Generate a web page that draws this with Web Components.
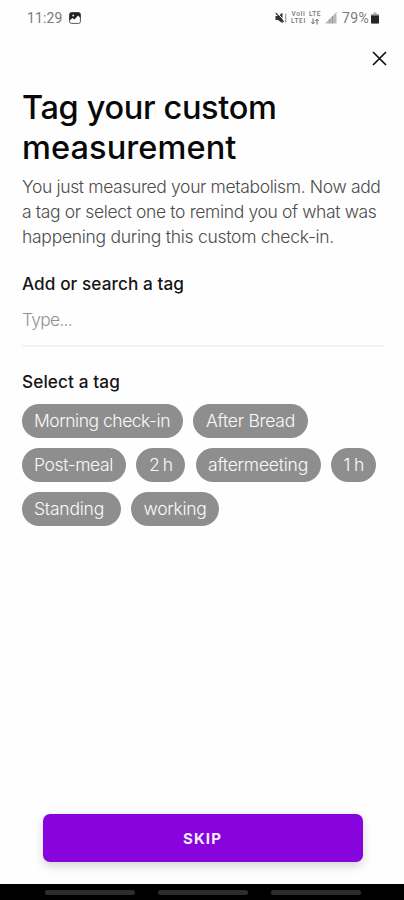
<!DOCTYPE html>
<html lang="en">
<head>
<meta charset="utf-8">
<title>Tag your custom measurement</title>
<style>
html,body{margin:0;height:100%;background:#fefefe}
body{font-family:Inter,"Liberation Sans",sans-serif;overflow:hidden}
</style>
</head>
<body>
<tag-screen></tag-screen>
<script>
const define = (name, html, ready) => customElements.define(name, class extends HTMLElement {
  connectedCallback() {
    if (this.shadowRoot) return;
    this.attachShadow({mode: 'open'}).innerHTML = html;
    if (ready) ready(this);
  }
});

/* One line of text, tracked so that it spans the width given in "w". */
define('text-line', `<style>:host{display:block;white-space:nowrap}span{display:inline-block;vertical-align:top}</style><span><slot></slot></span>`, el => {
  const span = el.shadowRoot.querySelector('span');
  const w = parseFloat(el.getAttribute('w'));
  if (w) {
    span.style.letterSpacing = '0px';
    const gap = (w - span.getBoundingClientRect().width) / el.textContent.length;
    span.style.letterSpacing = gap.toFixed(3) + 'px';
  }
});

define('status-bar', `<style>
:host{display:flex;align-items:center;height:36px;padding:0 25px 0 27px;box-sizing:border-box;font:400 14px/18px Roboto,sans-serif;color:#7c7c7c}
svg{display:block;flex:none}
.pic{margin-left:6px}.sp{flex:1}
.mute{margin-right:4px}.volte{margin-right:3px}.lte{margin-right:4px}.sig{margin-right:5px}.bat{margin-left:2px}
.net{display:flex;flex-direction:column;font:500 6.500px/7px Roboto,sans-serif;color:#777;align-items:center}
</style>
<text-line w="35.500">11:29</text-line>
<svg class="pic" width="12" height="12" viewBox="0 0 12 12"><rect x=".6" y=".6" width="10.8" height="10.8" rx="1.8" fill="#fff" stroke="#555" stroke-width="1"/><path d="M.5 8.5V2L2 .5H10L11.500 2V6L9 3.500 5.500 7.500 3.500 6z" fill="#222"/><circle cx="4.200" cy="3.500" r="1" fill="#ddd"/></svg>
<span class="sp"></span>
<svg class="mute" width="12" height="12" viewBox="0 0 12 12"><path d="M.5 4H3L7.500.8V11.200L3 8H.5z" fill="#333"/><path d="M1.500 0 9.500 9" stroke="#fff"/><path d="M.7.8 8.700 10" stroke="#333" stroke-width="1.200"/><path d="M10.700 1.500v9" stroke="#999" stroke-width="1.200"/></svg>
<div class="net volte"><text-line w="14">VoII</text-line><text-line w="15">LTEI</text-line></div>
<div class="net lte"><text-line w="12">LTE</text-line><svg width="10" height="7" viewBox="0 0 10 7"><path d="M3 .5v5M1.300 4 3 5.800 4.700 4M7 6.500V1.500M5.300 3 7 1.200 8.700 3" fill="none" stroke="#666"/></svg></div>
<svg class="sig" width="12" height="12" viewBox="0 0 12 12"><path d="M0 11.500 11.500 0V11.500z" fill="#b9b9b9"/><path d="M4.500 11.500V7M7.500 11.500V4" stroke="#999"/></svg>
<text-line w="27">79%</text-line>
<svg class="bat" width="8" height="12" viewBox="0 0 8 12"><path d="M2.500.5h3v1.500H8V10.500Q8 11.500 7 11.500H1Q0 11.500 0 10.500V2H2.500z" fill="#aaa"/><path d="M0 3.500H8V10.500Q8 11.500 7 11.500H1Q0 11.500 0 10.500z" fill="#262626"/></svg>`);

define('close-button', `<style>:host{display:flex;justify-content:flex-end;height:44px;padding:15px 17.500px 0 0;box-sizing:border-box}svg{display:block}</style>
<svg width="15" height="15" viewBox="0 0 15 15"><path d="M1 1 14 14M14 1 1 14" stroke="#111" stroke-width="1.700"/></svg>`);

define('page-title', `<style>:host{display:block;font-size:32.500px;line-height:40px;font-weight:500;color:#080808}</style><slot></slot>`);
define('page-copy', `<style>:host{display:block;font-size:17.500px;line-height:25.200px;font-weight:300;color:#4c4c4c;margin-top:6px}</style><slot></slot>`);
define('field-label', `<style>:host{display:block;font-size:17.200px;line-height:24px;font-weight:500;color:#151515}</style><slot></slot>`);
define('tag-input', `<style>:host{display:block;height:51px;box-sizing:border-box;padding-top:12px;font-size:17.500px;line-height:24px;font-weight:300;color:#929292;border-bottom:2px solid #f3f3f3}</style><slot></slot>`);
define('tag-chip', `<style>:host{display:flex;align-items:center;justify-content:center;box-sizing:border-box;height:34px;border-radius:17px;background:#8e8e8e;color:#fafafa;font-size:17.500px;line-height:24px;font-weight:300}</style><slot></slot>`, el => { el.style.width = el.getAttribute('width') + 'px'; });
define('tag-row', `<style>:host{display:flex;gap:10.500px;margin-bottom:10.300px;margin-left:-.5px}</style><slot></slot>`);
define('action-button', `<style>:host{display:flex;align-items:center;justify-content:center;height:48px;margin:0 41.500px 22px 42.500px;border-radius:7px;background:#8705dc;color:#f8ecff;font-size:15px;font-weight:700;box-shadow:0 4px 10px rgba(0,0,0,.17)}</style><slot></slot>`);
define('nav-bar', `<style>:host{display:flex;height:16px;background:#000;gap:23.500px;padding:6px 43px 0 45px;box-sizing:border-box}i{flex:1;height:5px;border-radius:2.500px;background:#2d2d2d}</style><i></i><i></i><i></i>`);

define('tag-screen', `<style>
:host{display:flex;flex-direction:column;width:404px;height:900px;background:#fefefe}
main{flex:1;padding:8px 20px 0 22px}
.add{margin-top:22px}.sel{margin:23px 0 10px}
</style>
<status-bar></status-bar>
<close-button></close-button>
<main>
<page-title><text-line w="254.500">Tag your custom</text-line><text-line w="214.500">measurement</text-line></page-title>
<page-copy><text-line w="358.500">You just measured your metabolism. Now add</text-line><text-line w="354.500">a tag or select one to remind you of what was</text-line><text-line w="312">happening during this custom check-in.</text-line></page-copy>
<field-label class="add"><text-line w="162">Add or search a tag</text-line></field-label>
<tag-input><text-line w="50">Type...</text-line></tag-input>
<field-label class="sel"><text-line w="98">Select a tag</text-line></field-label>
<tag-row><tag-chip width="161"><text-line w="136">Morning check-in</text-line></tag-chip><tag-chip width="115"><text-line w="89">After Bread</text-line></tag-chip></tag-row>
<tag-row><tag-chip width="104"><text-line w="79">Post-meal</text-line></tag-chip><tag-chip width="49"><text-line w="23">2 h</text-line></tag-chip><tag-chip width="125"><text-line w="100">aftermeeting</text-line></tag-chip><tag-chip width="45"><text-line w="20">1 h</text-line></tag-chip></tag-row>
<tag-row><tag-chip width="99"><text-line w="70" style="margin-right:4px">Standing</text-line></tag-chip><tag-chip width="88"><text-line w="63">working</text-line></tag-chip></tag-row>
</main>
<action-button><text-line w="39">SKIP</text-line></action-button>
<nav-bar></nav-bar>`);
</script>
</body>
</html>
